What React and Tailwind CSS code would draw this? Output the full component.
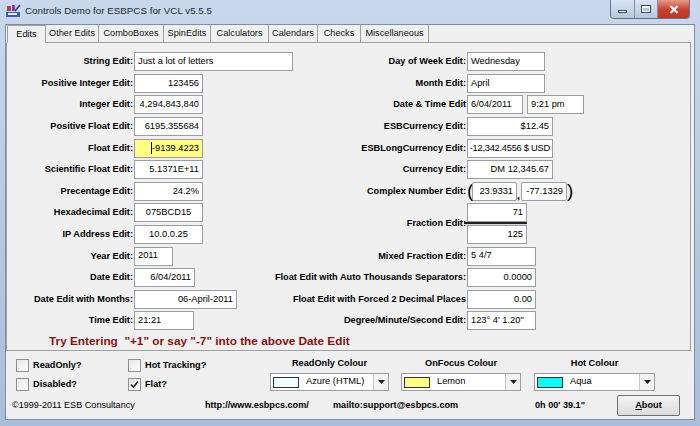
import React from 'react';

const FONT = "font-['Liberation_Sans',Arial,sans-serif]";

// Sunken edit box
function Edit({ w, align = 'justify-start', bg = 'bg-white', rounded = '', pad = 'px-[3px]', children }) {
  return (
    <div className={`h-[19px] ${w} shrink-0 ${bg} ${rounded} border border-[#9a9ea4] flex items-center ${align} ${pad} text-[9.3px] leading-none text-black whitespace-nowrap overflow-hidden`}>
      {children}
    </div>
  );
}

function Row({ labelW, label, children }) {
  return (
    <div className="h-[21.6px] flex items-center">
      <div className={`${labelW} shrink-0 pr-[1px] text-right font-bold text-[9.2px] leading-none text-black whitespace-nowrap`}>{label}</div>
      {children}
    </div>
  );
}

function Checkbox({ checked, label }) {
  return (
    <div className="h-[19px] flex items-center gap-[4px]">
      <div className="w-[13px] h-[13px] border border-[#8f8f8f] bg-gradient-to-br from-[#e6e6e6] to-white flex items-center justify-center">
        {checked && (
          <svg width="9" height="9" viewBox="0 0 9 9">
            <path d="M1 4.5 L3.5 7 L8 1.5" fill="none" stroke="#222" strokeWidth="1.6" />
          </svg>
        )}
      </div>
      <span className="font-bold text-[9.2px] leading-none">{label}</span>
    </div>
  );
}

function ColourCombo({ title, w, swatch, name }) {
  return (
    <div className={`${w} flex flex-col items-center`}>
      <div className="h-[14px] font-bold text-[9.2px] leading-none flex items-center">{title}</div>
      <div className="mt-[2px] w-full h-[18px] border border-[#9a9ea4] bg-white flex items-center">
        <div className={`ml-[2px] w-[26px] h-[11px] border border-[#333] ${swatch}`}></div>
        <span className="ml-[7px] flex-1 text-[9.3px] leading-none whitespace-nowrap">{name}</span>
        <div className="w-[15px] h-full border-l border-[#c8c8c8] bg-[#f4f4f4] flex items-center justify-center">
          <svg width="7" height="4" viewBox="0 0 7 4"><path d="M0 0 H7 L3.5 4 Z" fill="#222" /></svg>
        </div>
      </div>
    </div>
  );
}

const tabs = [
  ['Edits', 'w-[39px]'],
  ['Other Edits', 'w-[53px]'],
  ['ComboBoxes', 'w-[65px]'],
  ['SpinEdits', 'w-[47px]'],
  ['Calculators', 'w-[58px]'],
  ['Calendars', 'w-[49px]'],
  ['Checks', 'w-[43px]'],
  ['Miscellaneous', 'w-[68px]'],
];

function App() {
  const L = 'w-[127px]';
  const R = 'w-[197px]';

  return (
    <div className={`w-[700px] h-[426px] bg-gradient-to-b from-[#c9d8ec] via-[#b7cae3] to-[#a9bedb] flex flex-col px-[5px] pb-[6px] text-black ${FONT}`}>
      {/* Title bar */}
      <div className="h-[24px] flex items-start justify-between">
        <div className="h-[22px] flex items-center">
          <svg width="16" height="16" viewBox="0 0 16 16" className="mr-[4px]">
            <rect x="1" y="9" width="14" height="5" fill="#3a5fb8" />
            <rect x="2" y="3" width="4" height="5" fill="#c23a3a" />
            <rect x="7" y="2" width="3" height="6" fill="#7a3ab0" />
            <path d="M10 8 L15 2" stroke="#2b3f88" strokeWidth="1.5" />
            <rect x="3" y="10" width="9" height="2" fill="#e6edf8" />
          </svg>
          <span className="text-[9.8px] leading-none text-[#1e2a3a]">Controls Demo for ESBPCS for VCL v5.5.5</span>
        </div>
        <div className="mr-[5px] h-[19px] flex rounded-b-[4px] border border-t-0 border-[#5f7390] overflow-hidden">
          <div className="w-[24px] h-full bg-gradient-to-b from-[#dbe6f4] to-[#b5c7de] border-r border-[#7f92ad] flex items-center justify-center">
            <div className="w-[9px] h-[3px] bg-white border border-[#3b4a60] mt-[5px]"></div>
          </div>
          <div className="w-[23px] h-full bg-gradient-to-b from-[#dbe6f4] to-[#b5c7de] border-r border-[#7f92ad] flex items-center justify-center">
            <div className="w-[10px] h-[8px] border border-[#3b4a60] bg-white flex items-center justify-center">
              <div className="w-[6px] h-[3px] bg-[#b8c6d8]"></div>
            </div>
          </div>
          <div className="w-[31px] h-full bg-gradient-to-b from-[#e59a8b] via-[#c9432f] to-[#c0331f] flex items-center justify-center">
            <svg width="10" height="9" viewBox="0 0 10 9"><path d="M1.5 1 L8.5 8 M8.5 1 L1.5 8" stroke="white" strokeWidth="2.2" /></svg>
          </div>
        </div>
      </div>

      {/* Client area */}
      <div className="flex-1 border border-[#7d8fa8] bg-[#f0f0f0] flex flex-col">
        {/* Tabs */}
        <div className="h-[18px] flex items-stretch">
          {tabs.map(([t, w], i) => (
            <div
              key={t}
              className={`${w} flex items-center justify-center text-[9.2px] leading-none whitespace-nowrap ${
                i === 0
                  ? 'ml-[1px] border-l border-r border-t border-[#a0a0a0] bg-[#f0f0f0]'
                  : 'border-r border-b border-[#a0a0a0] text-[#111]'
              }`}
            >
              {t}
            </div>
          ))}
          <div className="flex-1 mr-[3px] border-b border-[#a0a0a0]"></div>
        </div>

        {/* Page */}
        <div className="h-[308px] mr-[3px] border-l border-r border-b border-[#a0a0a0] pt-[8px] flex flex-col">
          <div className="flex">
            {/* Left column */}
            <div className="w-[263px] shrink-0 flex flex-col">
              <Row labelW={L} label="String Edit:"><Edit w="w-[159px]">Just a lot of letters</Edit></Row>
              <Row labelW={L} label="Positive Integer Edit:"><Edit w="w-[69px]" align="justify-end">123456</Edit></Row>
              <Row labelW={L} label="Integer Edit:"><Edit w="w-[69px]" align="justify-end">4,294,843,840</Edit></Row>
              <Row labelW={L} label="Positive Float Edit:"><Edit w="w-[69px]" align="justify-end">6195.355684</Edit></Row>
              <Row labelW={L} label="Float Edit:">
                <Edit w="w-[69px]" align="justify-end" bg="bg-[#ffff80]">
                  <span className="w-[1px] h-[12px] bg-black"></span>-9139.4223
                </Edit>
              </Row>
              <Row labelW={L} label="Scientific Float Edit:"><Edit w="w-[69px]" align="justify-end">5.1371E+11</Edit></Row>
              <Row labelW={L} label="Precentage Edit:"><Edit w="w-[69px]" align="justify-end">24.2%</Edit></Row>
              <Row labelW={L} label="Hexadecimal Edit:"><Edit w="w-[69px]" align="justify-center">075BCD15</Edit></Row>
              <Row labelW={L} label="IP Address Edit:"><Edit w="w-[69px]" align="justify-center">10.0.0.25</Edit></Row>
              <Row labelW={L} label="Year Edit:"><Edit w="w-[39px]">2011</Edit></Row>
              <Row labelW={L} label="Date Edit:"><Edit w="w-[61px]" align="justify-end">6/04/2011</Edit></Row>
              <Row labelW={L} label="Date Edit with Months:"><Edit w="w-[103px]" align="justify-end">06-April-2011</Edit></Row>
              <Row labelW={L} label="Time Edit:"><Edit w="w-[60px]">21:21</Edit></Row>
            </div>

            {/* Right column */}
            <div className="flex flex-col">
              <Row labelW={R} label="Day of Week Edit:"><Edit w="w-[78px]">Wednesday</Edit></Row>
              <Row labelW={R} label="Month Edit:"><Edit w="w-[78px]">April</Edit></Row>
              <Row labelW={R} label="Date & Time Edit">
                <Edit w="w-[56px]">6/04/2011</Edit>
                <div className="ml-[4px]"><Edit w="w-[57px]">9:21 pm</Edit></div>
              </Row>
              <Row labelW={R} label="ESBCurrency Edit:"><Edit w="w-[86px]" align="justify-end">$12.45</Edit></Row>
              <Row labelW={R} label="ESBLongCurrency Edit:">
                <Edit w="w-[86px]" align="justify-end" pad="px-[2px]">
                  <span className="tracking-[-0.25px]">-12,342.4556 $ USD</span>
                </Edit>
              </Row>
              <Row labelW={R} label="Currency Edit:"><Edit w="w-[86px]" align="justify-end">DM 12,345.67</Edit></Row>
              <Row labelW={R} label="Complex Number Edit:">
                <span className="text-[19px] leading-none -mt-[2px] w-[5px]">(</span>
                <Edit w="w-[45px]" align="justify-end" rounded="rounded-[2px]">23.9331</Edit>
                <span className="w-[4px] text-[11px] font-bold leading-none self-end mb-[1px]">,</span>
                <Edit w="w-[46px]" align="justify-end" rounded="rounded-[2px]">-77.1329</Edit>
                <span className="text-[19px] leading-none -mt-[2px]">)</span>
              </Row>
              <div className="h-[43.2px] flex items-center">
                <div className={`${R} shrink-0 pr-[1px] text-right font-bold text-[9.2px] leading-none whitespace-nowrap`}>Fraction Edit:</div>
                <div className="flex flex-col">
                  <Edit w="w-[60px]" align="justify-end">71</Edit>
                  <div className="-ml-[3px] w-[63px] h-[3px] border-t-2 border-[#222] border-b border-b-[#d8d8d8]"></div>
                  <Edit w="w-[60px]" align="justify-end">125</Edit>
                </div>
              </div>
              <Row labelW={R} label="Mixed Fraction Edit:"><Edit w="w-[69px]">5 4/7</Edit></Row>
              <Row labelW={R} label="Float Edit with Auto Thousands Separators:"><Edit w="w-[69px]" align="justify-end">0.0000</Edit></Row>
              <Row labelW={R} label="Float Edit with Forced 2 Decimal Places"><Edit w="w-[69px]" align="justify-end">0.00</Edit></Row>
              <Row labelW={R} label="Degree/Minute/Second Edit:"><Edit w="w-[69px]">123° 4' 1.20"</Edit></Row>
            </div>
          </div>

          <div className="mt-[2px] pl-[42px] h-[16px] flex items-center text-[11.8px] leading-none font-bold text-[#8e0f0f] whitespace-pre">
            Try Entering  "+1" or say "-7" into the above Date Edit
          </div>
        </div>

        {/* Bottom panel */}
        <div className="flex-1 flex flex-col">
          <div className="pl-[10px] pt-[5px] flex items-start">
            <div className="w-[112px] flex flex-col">
              <Checkbox label="ReadOnly?" />
              <Checkbox label="Disabled?" />
            </div>
            <div className="w-[142px] flex flex-col">
              <Checkbox label="Hot Tracking?" />
              <Checkbox checked label="Flat?" />
            </div>
            <div className="pt-[1px] flex">
              <ColourCombo title="ReadOnly Colour" w="w-[119px]" swatch="bg-[#f0ffff]" name="Azure (HTML)" />
              <div className="ml-[12px]">
                <ColourCombo title="OnFocus Colour" w="w-[120px]" swatch="bg-[#ffff80]" name="Lemon" />
              </div>
              <div className="ml-[13px]">
                <ColourCombo title="Hot Colour" w="w-[121px]" swatch="bg-[#00ffff]" name="Aqua" />
              </div>
            </div>
          </div>

          <div className="mt-[1px] pl-[6px] h-[21px] flex items-center text-[9.1px] leading-none">
            <span className="w-[193px]">©1999-2011 ESB Consultancy</span>
            <span className="w-[128px] font-bold">http://www.esbpcs.com/</span>
            <span className="w-[202px] font-bold">mailto:support@esbpcs.com</span>
            <span className="w-[82px] font-bold">0h 00' 39.1"</span>
            <button className="w-[63px] h-[21px] border border-[#707070] rounded-[2px] bg-gradient-to-b from-[#f4f4f4] to-[#dcdcdc] font-bold text-[9.2px] leading-none">
              <span className="underline">A</span>bout
            </button>
          </div>
        </div>
      </div>
    </div>
  );
}

export default App;
